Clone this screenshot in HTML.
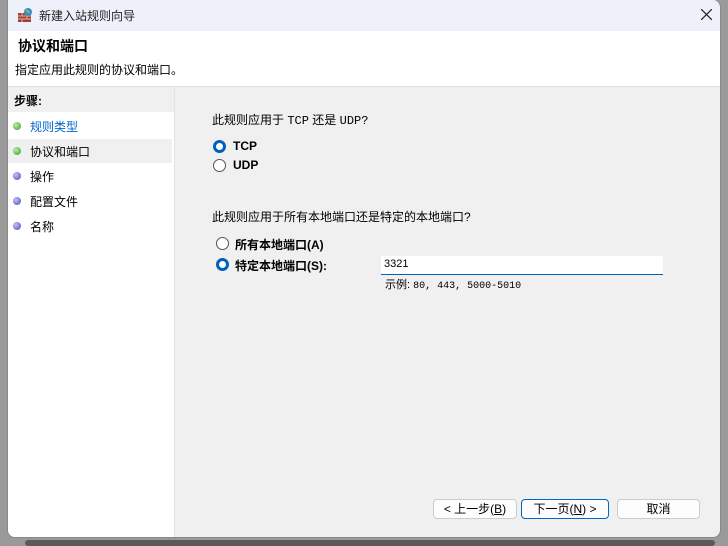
<!DOCTYPE html>
<html><head><meta charset="utf-8"><style>
*{margin:0;padding:0;box-sizing:border-box}
body{width:728px;height:546px;overflow:hidden;background:#9a9a9a;font-family:"Liberation Sans","Noto Sans CJK SC",sans-serif;font-size:12px;color:#000;position:relative}
.win{position:absolute;left:7px;top:0;width:714px;height:538px;background:#f0f0f0;border-radius:0 8px 8px 8px;overflow:hidden;border:1px solid #888;border-top:none}
.title{position:absolute;left:0;top:0;width:100%;height:31px;background:#eef1f9}
.hdr{position:absolute;left:0;top:31px;width:100%;height:56px;background:#fff;border-bottom:1px solid #ddd}
.left{position:absolute;left:0;top:88px;width:167px;height:450px;background:#fff;border-right:1px solid #e2e2e2}
.abs{position:absolute;white-space:nowrap}
.dot{position:absolute;width:8px;height:8px;border-radius:50%}
.g{background:radial-gradient(circle at 35% 35%,#b8f0a0,#3a9a2a)}
.b{background:radial-gradient(circle at 35% 35%,#c0c0ff,#4a4ab0)}
.r{position:absolute;width:13px;height:13px;border-radius:50%;border:1px solid #555;background:#fff}
.r.on{border:3.5px solid #0060c0}
.btn{position:absolute;height:20px;border:1px solid #ccc;border-radius:4px;background:#fdfdfd;text-align:center;line-height:18px}
.mono{font-family:"Liberation Mono","Noto Sans CJK SC",monospace}
</style></head><body>
<div class="win">
<div class="title"></div>
<svg class="abs" style="left:9px;top:7px" width="16" height="16"><rect x="1" y="6" width="13" height="9" fill="#a04030"/><path d="M1 9h13M1 12h13M5 6v3M10 9v3M5 12v3" stroke="#e0b0a0" stroke-width="1"/><circle cx="11" cy="5" r="4" fill="#3a8ad0"/><path d="M9 3q2 1 3 3" stroke="#7c4" stroke-width="2" fill="none"/></svg>
<div class="abs" style="left:31px;top:7px;font-size:12px;color:#222">新建入站规则向导</div>
<svg class="abs" style="left:693px;top:9px" width="11" height="11"><path d="M0 0L11 11M11 0L0 11" stroke="#222" stroke-width="1.2"/></svg>
<div class="hdr"></div>
<div class="abs" style="left:10px;top:36px;font-size:14px;font-weight:bold">协议和端口</div>
<div class="abs" style="left:7px;top:61px;font-size:12px">指定应用此规则的协议和端口。</div>
<div class="left">
<div style="position:absolute;left:0;top:0;width:166px;height:24px;background:#f0f0f0"></div>
<div class="abs" style="left:6px;top:4px;font-weight:bold">步骤:</div>
<div style="position:absolute;left:0;top:51px;width:164px;height:24px;background:#f0f0f0"></div>
<div class="dot g" style="left:5px;top:34px"></div><div class="abs" style="left:22px;top:30px;color:#0066cc">规则类型</div>
<div class="dot g" style="left:5px;top:59px"></div><div class="abs" style="left:22px;top:55px">协议和端口</div>
<div class="dot b" style="left:5px;top:84px"></div><div class="abs" style="left:22px;top:80px">操作</div>
<div class="dot b" style="left:5px;top:109px"></div><div class="abs" style="left:22px;top:105px">配置文件</div>
<div class="dot b" style="left:5px;top:134px"></div><div class="abs" style="left:22px;top:130px">名称</div>
</div>
<div class="abs" style="left:204px;top:111px">此规则应用于 <span class="mono">TCP</span> 还是 <span class="mono">UDP?</span></div>
<div class="r on" style="left:205px;top:140px"></div><div class="abs" style="left:225px;top:139px;font-weight:bold">TCP</div>
<div class="r" style="left:205px;top:159px"></div><div class="abs" style="left:225px;top:158px;font-weight:bold">UDP</div>
<div class="abs" style="left:204px;top:208px">此规则应用于所有本地端口还是特定的本地端口?</div>
<div class="r" style="left:208px;top:237px"></div><div class="abs" style="left:227px;top:236px;font-weight:bold">所有本地端口(A)</div>
<div class="r on" style="left:208px;top:258px"></div><div class="abs" style="left:227px;top:257px;font-weight:bold">特定本地端口(S):</div>
<div class="abs" style="left:373px;top:256px;width:282px;height:19px;background:#fff;border-bottom:1px solid #0060c0"></div>
<div class="abs" style="left:376px;top:258px;font-size:11px">3321</div>
<div class="abs" style="left:377px;top:276px;font-size:11px">示例: <span class="mono" style="font-size:10px">80, 443, 5000-5010</span></div>
<div class="btn" style="left:425px;top:499px;width:84px">&lt; 上一步(<u>B</u>)</div>
<div class="btn" style="left:513px;top:499px;width:88px;border-color:#0067c0">下一页(<u>N</u>) &gt;</div>
<div class="btn" style="left:609px;top:499px;width:83px">取消</div>
</div>
<div class="abs" style="left:25px;top:540px;width:690px;height:6px;background:#5a5a5a;border-radius:3px"></div>
</body></html>
